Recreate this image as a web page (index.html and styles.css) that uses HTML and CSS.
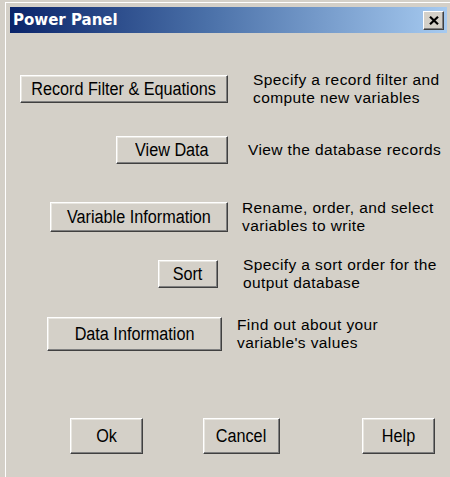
FILE: index.html
```html
<!DOCTYPE html>
<html>
<head>
<meta charset="utf-8">
<title>Power Panel</title>
<link rel="stylesheet" href="styles.css">
</head>
<body>
<div class="window">
  <div class="titlebar">
    <span class="title">Power Panel</span>
    <button class="close" aria-label="Close">
      <svg width="10" height="9" viewBox="0 0 10 9"><path d="M1 0.8 L9 8.2 M9 0.8 L1 8.2" stroke="#000" stroke-width="2.2" fill="none"/></svg>
    </button>
  </div>
  <div class="content">
    <div class="row row-filter">
      <button class="btn btn-filter"><span class="lbl">Record Filter &amp; Equations</span></button>
      <p class="desc">Specify a record filter and<br>compute new variables</p>
    </div>
    <div class="row row-view">
      <button class="btn btn-view"><span class="lbl">View Data</span></button>
      <p class="desc">View the database records</p>
    </div>
    <div class="row row-varinfo">
      <button class="btn btn-varinfo"><span class="lbl">Variable Information</span></button>
      <p class="desc">Rename, order, and select<br>variables to write</p>
    </div>
    <div class="row row-sort">
      <button class="btn btn-sort"><span class="lbl">Sort</span></button>
      <p class="desc">Specify a sort order for the<br>output database</p>
    </div>
    <div class="row row-datainfo">
      <button class="btn btn-datainfo"><span class="lbl">Data Information</span></button>
      <p class="desc">Find out about your<br>variable's values</p>
    </div>
    <div class="footer">
      <button class="btn btn-ok"><span class="lbl">Ok</span></button>
      <button class="btn btn-cancel"><span class="lbl">Cancel</span></button>
      <button class="btn btn-help"><span class="lbl">Help</span></button>
    </div>
  </div>
</div>
</body>
</html>
```
FILE: styles.css
```css
html, body {
  margin: 0;
  padding: 0;
  background: #d4d0c8;
  height: 100%;
  overflow: hidden;
}

.window {
  margin: 2px 0 0 5px;
  border-top: 1px solid #ffffff;
  border-left: 1px solid #ffffff;
  padding: 4px 3px 0 4px;
  height: 100%;
  box-sizing: border-box;
}

.titlebar {
  height: 26px;
  display: flex;
  align-items: center;
  justify-content: space-between;
  padding: 0 3px 0 3px;
  background: linear-gradient(to right, #0a246a 0%, #4a70a8 45%, #a6caf0 100%);
}

.title {
  font-family: "DejaVu Sans", Verdana, sans-serif;
  font-weight: bold;
  font-size: 15px;
  color: #ffffff;
}

.close {
  width: 21px;
  height: 19px;
  padding: 0;
  display: flex;
  align-items: center;
  justify-content: center;
  background: #d4d0c8;
  border: 1px solid;
  border-color: #ffffff #404040 #404040 #ffffff;
  box-shadow: inset -1px -1px #808080;
}

.content {
  display: flex;
  flex-direction: column;
  font-family: "Liberation Sans", Arial, sans-serif;
  color: #000;
}

.row {
  height: 36px;
  display: flex;
  align-items: center;
}

.desc {
  margin: 0;
  font-size: 15.5px;
  line-height: 18px;
  letter-spacing: 0.4px;
  white-space: nowrap;
}

/* tall, narrow lettering of the classic dialog font */
.lbl {
  display: inline-block;
  transform: scaleX(0.9);
  white-space: nowrap;
}

.btn {
  height: 28px;
  padding: 0;
  font-family: "Liberation Sans", Arial, sans-serif;
  font-size: 18px;
  line-height: 1;
  color: #000;
  background: #d4d0c8;
  border: 1px solid;
  border-color: #ffffff #404040 #404040 #ffffff;
  box-shadow: inset -1px -1px #808080, inset 1px 1px #e8e6e0;
  flex: none;
  display: flex;
  align-items: center;
  justify-content: center;
}

.row-filter { margin-top: 38px; }
.btn-filter { margin-left: 10px; width: 208px; }
.row-filter .desc { margin-left: 25px; }

.row-view { margin-top: 25px; }
.btn-view { margin-left: 106px; width: 112px; }
.row-view .desc { margin-left: 20px; }

.row-varinfo { margin-top: 31px; }
.btn-varinfo { margin-left: 40px; width: 178px; height: 30px; }
.row-varinfo .desc { margin-left: 14px; }

.row-sort { margin-top: 21px; }
.btn-sort { margin-left: 148px; width: 60px; }
.row-sort .desc { margin-left: 25px; }

.row-datainfo { margin-top: 24px; }
.btn-datainfo { margin-left: 37px; width: 175px; height: 34px; }
.row-datainfo .desc { margin-left: 15px; }

.footer {
  margin-top: 66px;
  height: 36px;
  display: flex;
  align-items: center;
}

.footer .btn { height: 36px; }
.btn-ok { margin-left: 60px; width: 73px; }
.btn-cancel { margin-left: 60px; width: 77px; }
.btn-help { margin-left: 82px; width: 73px; }
```
